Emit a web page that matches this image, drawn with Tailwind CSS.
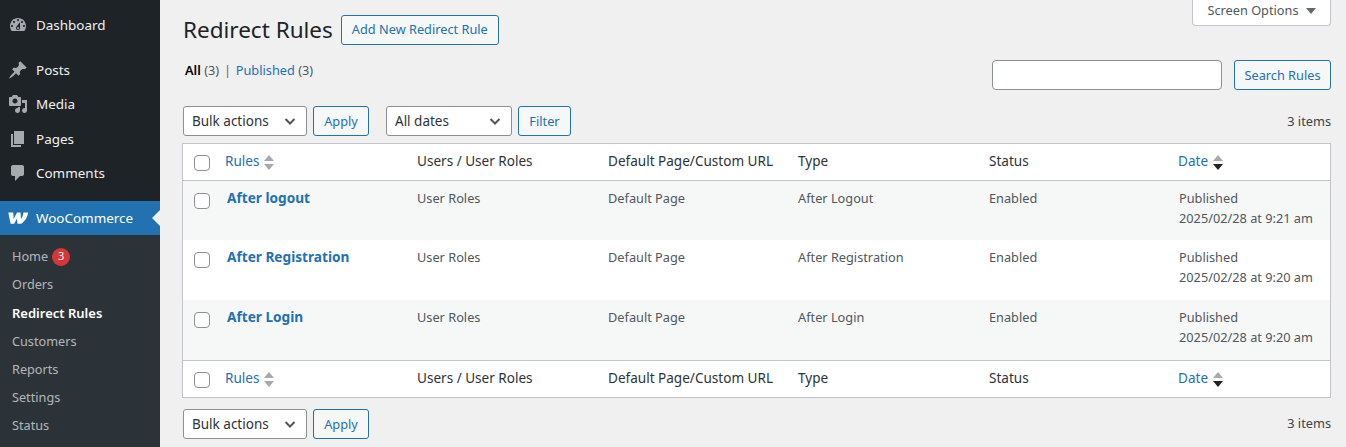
<!DOCTYPE html>
<html lang="en">
<head>
    <meta charset="UTF-8">
    <title>Redirect Rules</title>
    <script src="https://cdn.jsdelivr.net/npm/@tailwindcss/browser@4"></script>
</head>
<body class="bg-[#f0f0f1] text-[#3c434a] font-['Noto_Sans',sans-serif] text-[12.75px] overflow-hidden">
<div class="flex h-[447px] overflow-hidden">
    <!-- sidebar -->
    <aside class="w-[160px] shrink-0 bg-[#1d2327] text-[#f0f0f1] text-[13.45px] pt-[7px]">
        <a class="flex items-center h-[34px] pt-[2px] mb-[11px]">
            <svg class="w-5 h-5 ml-[8px] mr-[8px] fill-[#a7aaad]" viewBox="0 0 20 20"><path d="M3.76 16h12.48c1.1-1.37 1.76-3.11 1.76-5 0-4.42-3.58-8-8-8s-8 3.58-8 8c0 1.89.66 3.63 1.76 5zM10 4c.55 0 1 .45 1 1s-.45 1-1 1-1-.45-1-1 .45-1 1-1zM6 6c.55 0 1 .45 1 1s-.45 1-1 1-1-.45-1-1 .45-1 1-1zm8 0c.55 0 1 .45 1 1s-.45 1-1 1-1-.45-1-1 .45-1 1-1zm-5.37 5.55L12 7v6c0 1.1-.9 2-2 2s-2-.9-2-2c0-.57.24-1.08.63-1.45zM4 10c.55 0 1 .45 1 1s-.45 1-1 1-1-.45-1-1 .45-1 1-1zm12 0c.55 0 1 .45 1 1s-.45 1-1 1-1-.45-1-1 .45-1 1-1zm-5 3c0-.55-.45-1-1-1s-1 .45-1 1 .45 1 1 1 1-.45 1-1z"/></svg>
            Dashboard
        </a>
        <a class="flex items-center h-[34.5px] pt-[2px]">
            <svg class="w-5 h-5 ml-[8px] mr-[8px] fill-[#a7aaad]" viewBox="0 0 20 20"><path d="M10.44 3.02l1.82-1.82 6.36 6.35-1.83 1.82c-1.05-.68-2.48-.57-3.41.36l-.75.75c-.92.93-1.04 2.35-.35 3.41l-1.83 1.82-2.41-2.41-2.8 2.79c-.42.42-3.38 2.71-3.8 2.29s1.86-3.39 2.28-3.81l2.79-2.79L4.1 9.36l1.83-1.82c1.05.69 2.48.57 3.4-.36l.75-.75c.93-.92 1.05-2.35.36-3.41z"/></svg>
            Posts
        </a>
        <a class="flex items-center h-[34.5px]">
            <svg class="w-5 h-5 ml-[8px] mr-[8px] fill-[#a7aaad]" viewBox="0 0 20 20"><path d="M13 11V4c0-.55-.45-1-1-1h-1.67L9 1H5L3.67 3H2c-.55 0-1 .45-1 1v7c0 .55.45 1 1 1h10c.55 0 1-.45 1-1zM7 4.500c1.38 0 2.5 1.12 2.5 2.5S8.38 9.5 7 9.5 4.5 8.38 4.5 7 5.62 4.5 7 4.5zM14 6h5v10.5c0 1.38-1.12 2.5-2.5 2.5S14 17.88 14 16.5s1.12-2.5 2.5-2.5c.17 0 .34.02.5.05V9h-3V6zm-4 8.05V13h2v3.5c0 1.38-1.12 2.5-2.5 2.5S7 17.88 7 16.5 8.12 14 9.5 14c.17 0 .34.02.5.05z"/></svg>
            Media
        </a>
        <a class="flex items-center h-[34.5px] pt-[2px]">
            <svg class="w-5 h-5 ml-[8px] mr-[8px] fill-[#a7aaad]" viewBox="0 0 20 20"><path d="M6 15V2h10v13H6zm-1 1h8v2H3V5h2v11z"/></svg>
            Pages
        </a>
        <a class="flex items-center h-[34.5px] mb-[11px]">
            <svg class="w-5 h-5 ml-[8px] mr-[8px] fill-[#a7aaad]" viewBox="0 0 20 20"><path d="M5 2h9c1.1 0 2 .9 2 2v7c0 1.1-.9 2-2 2h-2l-5 5v-5H5c-1.1 0-2-.9-2-2V4c0-1.1.9-2 2-2z"/></svg>
            Comments
        </a>
        <a class="relative flex items-center h-[34px] bg-[#2271b1] text-white">
            <svg class="w-5 h-[12px] ml-[8px] mr-[8px]" viewBox="0 0 20 12"><path d="M0.3 0.5H5.2L5.7 7L9 0.5H12.5L13 7C14.5 5 15.3 3 15.4 0.5H20C19.8 5 17 9 13.2 11.8H9.4L9 6.5L6.2 11.800H2.6Z" fill="#fff"/></svg>
            WooCommerce
            <span class="absolute right-0 top-[9px] w-0 h-0 border-y-[8px] border-y-transparent border-r-[8px] border-r-[#f0f0f1]"></span>
        </a>
        <ul class="bg-[#2c3338] text-[12.7px] text-[#f0f0f1]/70 pt-[7px] pb-[20px]">
            <li class="flex items-center h-[28px] pl-3 pt-[1px]">Home <span class="ml-[4px] w-[18px] h-[18px] rounded-full bg-[#d63638] text-white text-[11px] flex items-center justify-center">3</span></li>
            <li class="flex items-center h-[28px] pl-3 pt-[2px]">Orders</li>
            <li class="flex items-center h-[28px] pl-3 pt-[4px] font-semibold text-white text-[13px]">Redirect Rules</li>
            <li class="flex items-center h-[28px] pl-3 pt-[3px]">Customers</li>
            <li class="flex items-center h-[28px] pl-3 pt-[3px]">Reports</li>
            <li class="flex items-center h-[28px] pl-3 pt-[3px]">Settings</li>
            <li class="flex items-center h-[28px] pl-3 pt-[3px]">Status</li>
        </ul>
    </aside>

    <!-- content -->
    <main class="relative flex-1 pl-[23px] pr-[15px]">
        <div class="absolute right-[15px] top-0 w-[139px] h-[26px] pb-[4px] bg-white border border-t-0 border-[#c3c4c7] rounded-b-[4px] flex items-center justify-center gap-[7px] text-[#50575e]">
            Screen Options
            <svg class="w-[10px] h-[6px] fill-[#646970]" viewBox="0 0 10 6"><path d="M0 0h10L5 6z"/></svg>
        </div>

        <div class="flex items-center h-[30px] mt-[15px]">
            <h1 class="text-[22.5px] text-[#1d2327] mr-[8px]">Redirect Rules</h1>
            <a class="h-[30px] w-[158px] justify-center flex items-center border border-[#2271b1] rounded-[3px] bg-[#f6f7f7] text-[#2271b1]">Add New Redirect Rule</a>
        </div>

        <div class="flex justify-between mt-[15px] h-[30px]">
            <div class="pl-[2px] -mt-[1px] leading-[22px]"><b class="text-black font-semibold">All</b> <span class="text-[#50575e]">(3)</span> <span class="text-[#646970] mx-[1.5px]">|</span> <span class="text-[#2271b1]">Published</span> <span class="text-[#50575e]">(3)</span></div>
            <div class="flex gap-[12px]">
                <input type="text" class="w-[230px] h-[30px] bg-white border border-[#8c8f94] rounded-[4px]">
                <a class="w-[97px] h-[30px] pt-[1px] flex items-center justify-center border border-[#2271b1] rounded-[3px] bg-[#f6f7f7] text-[#2271b1]">Search Rules</a>
            </div>
        </div>

        <div class="flex items-center mt-[16px] h-[30px]">
            <div class="w-[124px] h-[30px] flex items-center justify-between pl-2 pr-[8px] bg-white border border-[#8c8f94] rounded-[3px] text-[13.5px] text-[#2c3338]">
                Bulk actions
                <svg class="w-4 h-4" viewBox="0 0 16 16" fill="none" stroke="#50575e" stroke-width="2"><path d="M3.5 6 8 10.5 12.500 6"/></svg>
            </div>
            <a class="w-[56px] h-[30px] pt-[1px] ml-[6px] flex items-center justify-center border border-[#2271b1] rounded-[3px] bg-[#f6f7f7] text-[#2271b1]">Apply</a>
            <div class="w-[126px] h-[30px] ml-[17px] flex items-center justify-between pl-2 pr-[8px] bg-white border border-[#8c8f94] rounded-[3px] text-[13.5px] text-[#2c3338]">
                All dates
                <svg class="w-4 h-4" viewBox="0 0 16 16" fill="none" stroke="#50575e" stroke-width="2"><path d="M3.5 6 8 10.5 12.500 6"/></svg>
            </div>
            <a class="w-[53px] h-[30px] pt-[1px] ml-[6px] flex items-center justify-center border border-[#2271b1] rounded-[3px] bg-[#f6f7f7] text-[#2271b1]">Filter</a>
            <span class="ml-auto pt-[1px]">3 items</span>
        </div>

        <table class="w-[1149px] -ml-[1px] mt-[7px] table-fixed bg-white border border-[#c3c4c7] border-separate border-spacing-0">
            <thead>
                <tr class="h-[37px] text-left text-[13.55px] text-[#2c3338]">
                    <th class="w-[32px] font-normal border-b border-[#c3c4c7] pl-[11px] pt-[2px]"><input type="checkbox" class="appearance-none block w-4 h-4 bg-white border border-[#8c8f94] rounded-[4px]"></th>
                    <th class="w-[192px] font-normal border-b border-[#c3c4c7] pl-[10px] pb-[2px]"><span class="inline-flex items-center gap-[5px] text-[#2271b1]">Rules <svg class="w-[10px] h-[15px] mt-[2px]" viewBox="0 0 10 15"><path d="M5 0l5 6H0z" fill="#a7aaad"/><path d="M5 15l5-6H0z" fill="#a7aaad"/></svg></span></th>
                    <th class="w-[191px] font-normal border-b border-[#c3c4c7] pl-[10px] pb-[2px]">Users / User Roles</th>
                    <th class="w-[190px] font-normal border-b border-[#c3c4c7] pl-[10px] pb-[2px]">Default Page/Custom URL</th>
                    <th class="w-[191px] font-normal border-b border-[#c3c4c7] pl-[10px] pb-[2px]">Type</th>
                    <th class="w-[189px] font-normal border-b border-[#c3c4c7] pl-[10px] pb-[2px]">Status</th>
                    <th class="font-normal border-b border-[#c3c4c7] pl-[10px] pb-[2px]"><span class="inline-flex items-center gap-[5px] text-[#2271b1]">Date <svg class="w-[10px] h-[15px] mt-[2px]" viewBox="0 0 10 15"><path d="M5 0l5 6H0z" fill="#a7aaad"/><path d="M5 15l5-6H0z" fill="#1d2327"/></svg></span></th>
                </tr>
            </thead>
            <tbody class="text-[#50575e] align-top">
                <tr class="h-[59px] bg-[#f6f7f7]">
                    <td class="pl-[11px] pt-[12px]"><input type="checkbox" class="appearance-none block w-4 h-4 bg-white border border-[#8c8f94] rounded-[4px]"></td>
                    <td class="pl-[12px] pt-[7px] text-[13.65px] font-bold text-[#2271b1]">After logout</td>
                    <td class="pl-[10px] pt-[8px]">User Roles</td>
                    <td class="pl-[10px] pt-[8px]">Default Page</td>
                    <td class="pl-[10px] pt-[8px]">After Logout</td>
                    <td class="pl-[10px] pt-[8px]">Enabled</td>
                    <td class="pl-[11px] pt-[7px] leading-[20px]">Published<br>2025/02/28 at 9:21 am</td>
                </tr>
                <tr class="h-[60px] bg-white">
                    <td class="pl-[11px] pt-[12px]"><input type="checkbox" class="appearance-none block w-4 h-4 bg-white border border-[#8c8f94] rounded-[4px]"></td>
                    <td class="pl-[12px] pt-[7px] text-[13.65px] font-bold text-[#2271b1]">After Registration</td>
                    <td class="pl-[10px] pt-[8px]">User Roles</td>
                    <td class="pl-[10px] pt-[8px]">Default Page</td>
                    <td class="pl-[10px] pt-[8px]">After Registration</td>
                    <td class="pl-[10px] pt-[8px]">Enabled</td>
                    <td class="pl-[11px] pt-[7px] leading-[20px]">Published<br>2025/02/28 at 9:20 am</td>
                </tr>
                <tr class="h-[60px] bg-[#f6f7f7]">
                    <td class="pl-[11px] pt-[12px]"><input type="checkbox" class="appearance-none block w-4 h-4 bg-white border border-[#8c8f94] rounded-[4px]"></td>
                    <td class="pl-[12px] pt-[7px] text-[13.65px] font-bold text-[#2271b1]">After Login</td>
                    <td class="pl-[10px] pt-[8px]">User Roles</td>
                    <td class="pl-[10px] pt-[8px]">Default Page</td>
                    <td class="pl-[10px] pt-[8px]">After Login</td>
                    <td class="pl-[10px] pt-[8px]">Enabled</td>
                    <td class="pl-[11px] pt-[7px] leading-[20px]">Published<br>2025/02/28 at 9:20 am</td>
                </tr>
            </tbody>
            <tfoot>
                <tr class="h-[37px] text-left text-[13.55px] text-[#2c3338]">
                    <th class="font-normal border-t border-[#c3c4c7] pl-[11px] pt-[2px]"><input type="checkbox" class="appearance-none block w-4 h-4 bg-white border border-[#8c8f94] rounded-[4px]"></th>
                    <th class="font-normal border-t border-[#c3c4c7] pl-[10px] pb-[2px]"><span class="inline-flex items-center gap-[5px] text-[#2271b1]">Rules <svg class="w-[10px] h-[15px] mt-[2px]" viewBox="0 0 10 15"><path d="M5 0l5 6H0z" fill="#a7aaad"/><path d="M5 15l5-6H0z" fill="#a7aaad"/></svg></span></th>
                    <th class="font-normal border-t border-[#c3c4c7] pl-[10px] pb-[2px]">Users / User Roles</th>
                    <th class="font-normal border-t border-[#c3c4c7] pl-[10px] pb-[2px]">Default Page/Custom URL</th>
                    <th class="font-normal border-t border-[#c3c4c7] pl-[10px] pb-[2px]">Type</th>
                    <th class="font-normal border-t border-[#c3c4c7] pl-[10px] pb-[2px]">Status</th>
                    <th class="font-normal border-t border-[#c3c4c7] pl-[10px] pb-[2px]"><span class="inline-flex items-center gap-[5px] text-[#2271b1]">Date <svg class="w-[10px] h-[15px] mt-[2px]" viewBox="0 0 10 15"><path d="M5 0l5 6H0z" fill="#a7aaad"/><path d="M5 15l5-6H0z" fill="#1d2327"/></svg></span></th>
                </tr>
            </tfoot>
        </table>

        <div class="flex items-center mt-[11px] h-[30px]">
            <div class="w-[124px] h-[30px] flex items-center justify-between pl-2 pr-[8px] bg-white border border-[#8c8f94] rounded-[3px] text-[13.5px] text-[#2c3338]">
                Bulk actions
                <svg class="w-4 h-4" viewBox="0 0 16 16" fill="none" stroke="#50575e" stroke-width="2"><path d="M3.5 6 8 10.5 12.500 6"/></svg>
            </div>
            <a class="w-[56px] h-[30px] pt-[1px] ml-[6px] flex items-center justify-center border border-[#2271b1] rounded-[3px] bg-[#f6f7f7] text-[#2271b1]">Apply</a>
            <span class="ml-auto">3 items</span>
        </div>
    </main>
</div>
</body>
</html>
